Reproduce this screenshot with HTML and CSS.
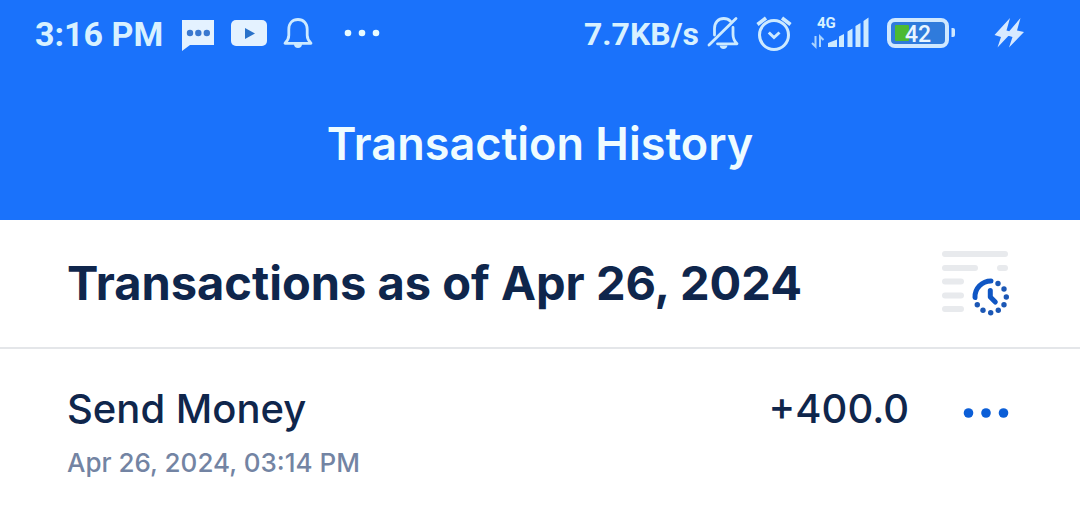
FILE: index.html
```html
<!DOCTYPE html>
<html lang="en">
<head>
  <meta charset="UTF-8" />
  <meta name="viewport" content="width=device-width, initial-scale=1.0" />
  <title>Transaction History</title>
  <link rel="stylesheet" href="styles.css">
</head>
<body>
  <header class="header">
    <div class="status-bar">
      <div class="status-left">
        <span class="time">3:16 PM</span>
        <svg class="icon" width="34" height="36" viewBox="0 0 34 36">
          <path d="M1 4h32v25H9l-8 6z" fill="#e4f2ff" />
          <g fill="#3a78cf"><circle cx="9" cy="17" r="3.2" /><circle cx="17.3" cy="17" r="3.2" /><circle cx="25.8" cy="17" r="3.2" /></g>
        </svg>
        <svg class="icon" width="36" height="36" viewBox="0 0 36 36">
          <rect y="4" width="36" height="26" rx="5" fill="#e4f2ff" />
          <path d="M14 12v11l10-5.5z" fill="#2a72c9" />
        </svg>
        <svg class="icon" width="30" height="36" viewBox="0 0 30 36">
          <path d="M2 27.3h26c-2.5-2.5-3.8-4.5-3.8-8v-6c0-5.8-3.6-9.8-9.2-9.8s-9.2 4-9.2 9.8v6c0 3.5-1.3 5.5-3.8 8z" fill="none" stroke="#cdeaff" stroke-width="2.8" stroke-linejoin="round" />
          <path d="M11 28h8c0 2.5-1.5 4-4 4s-4-1.5-4-4z" fill="#cdeaff" />
        </svg>
        <svg class="icon more-icon" width="36" height="36" viewBox="0 0 36 36">
          <g fill="#e8fbff"><circle cx="4" cy="17" r="3.3" /><circle cx="18" cy="17" r="3.3" /><circle cx="32" cy="17" r="3.3" /></g>
        </svg>
      </div>
      <div class="status-right">
        <span class="speed">7.7KB/s</span>
        <svg class="icon" width="34" height="36" viewBox="0 0 34 36">
          <g fill="none" stroke="#cdeaff" stroke-width="2.8" stroke-linecap="round" stroke-linejoin="round">
            <path d="M7.5 19v-6.5c0-6 3.8-10 9.3-10 2.8 0 5 1 6.7 2.8" />
            <path d="M26 11.5v7c0 4 1.3 6.5 4 9.3H10.5" />
            <path d="M2 29 29 2.500" />
          </g>
          <path d="M12.5 29.5h8c-.5 2.3-1.8 3.5-4 3.5s-3.5-1.2-4-3.5z" fill="#cdeaff" />
        </svg>
        <svg class="icon alarm-icon" width="36" height="36" viewBox="0 0 36 36">
          <g fill="none" stroke="#cdeaff" stroke-width="3">
            <circle cx="18" cy="19" r="14.5" />
            <path d="M1.500 8.500 10 2M26 2l8.500 6.500" stroke-width="3.6" />
            <path d="m12.8 16.5 5.2 5 5.500-5" />
          </g>
        </svg>
        <svg class="icon signal-icon" width="60" height="48" viewBox="0 -6 60 48">
          <text class="network" x="6" y="12">4G</text>
          <path d="M17 31v-4l9-3.500V31zM28 31V20.500l5-2.500v13zM36.500 31V15.500l5-3V31zM44.500 31V10l5-3v24zM52.500 31V5l5-3.500V31z" fill="#cdeaff" />
          <path d="M4.500 20v10.500L1 27M9 31V20.500l3.500 3.500" fill="none" stroke="#a9d3ff" stroke-width="2" />
        </svg>
        <svg class="icon battery-icon" width="70" height="36" viewBox="0 0 70 36">
          <rect x="2" y="4" width="58" height="26" rx="6" fill="#2f7bdc" stroke="#cfe8ff" stroke-width="4" />
          <rect x="8" y="9" width="14" height="16" rx="1" fill="#4cba32" />
          <path d="M64.5 12h1.5q2 0 2 2v5q0 2-2 2h-1.5z" fill="#cfe8ff" />
          <text class="battery-level" x="18" y="26">42</text>
        </svg>
        <svg class="icon bolt-icon" width="30" height="36" viewBox="0 0 30 36">
          <path d="M16 2 .5 19l6.500 2-3.500 10.500L18 16l-5.500-1.500zM26.500 2 12 19l6.500 2L15 31.500 30 16l-7-1.500z" fill="#d7e9ff" />
        </svg>
      </div>
    </div>
    <h1>Transaction History</h1>
  </header>

  <main>
    <div class="summary">
      <h2>Transactions as of Apr 26, 2024</h2>
      <button class="icon-button" type="button" aria-label="Filter by date">
        <svg class="icon" width="70" height="70" viewBox="0 0 70 70">
          <path d="M5 6h60M5 20h30M60 20h5M5 33.500h16M5 47.500h16M5 61h16" fill="none" stroke="#e8eaed" stroke-width="6" stroke-linecap="round" />
          <g transform="translate(2 0)">
            <path d="M33 49.500a16 16 0 0 1 16-16.500M48.300 42.500v6.500l5 5" fill="none" stroke="#0f56c4" stroke-width="5" stroke-linecap="round" stroke-linejoin="round" />
            <g fill="#1b57b5">
              <circle cx="56" cy="35.5" r="2.7" /><circle cx="62" cy="41" r="2.7" /><circle cx="64.3" cy="49" r="2.7" /><circle cx="62" cy="56.7" r="2.7" />
              <circle cx="56.3" cy="62.3" r="2.7" /><circle cx="48.7" cy="64.7" r="2.7" /><circle cx="41" cy="62.3" r="2.7" /><circle cx="35.3" cy="56.7" r="2.7" />
            </g>
          </g>
        </svg>
      </button>
    </div>

    <div class="transaction">
      <div class="details">
        <h3>Send Money</h3>
        <p class="date">Apr 26, 2024, 03:14 PM</p>
      </div>
      <span class="amount">+400.0</span>
      <button class="icon-button" type="button" aria-label="More options">
        <svg class="icon" width="46" height="44" viewBox="0 0 46 44">
          <g fill="#0b5ed7"><circle cx="5.5" cy="26" r="4.8" /><circle cx="23" cy="26" r="4.8" /><circle cx="40.5" cy="26" r="4.8" /></g>
        </svg>
      </button>
    </div>
  </main>
</body>
</html>
```

FILE: styles.css
```css
body {
  margin: 0;
  background: #fff;
  color: #0f264c;
  font-family: Inter, 'Open Sans', sans-serif;
}

h1, h2, h3, p {
  margin: 0;
}

.header {
  background: #1a72fb;
  color: #effcff;
  padding-bottom: 46px;
}

.status-bar {
  display: flex;
  justify-content: space-between;
  align-items: center;
  height: 68px;
  padding: 0 56px 0 35px;
  font-family: Roboto, sans-serif;
  font-size: 34px;
  font-weight: 700;
  color: #d8f1ff;
}

.status-left,
.status-right {
  display: flex;
  align-items: center;
}

.status-left {
  gap: 16px;
}

.status-right {
  gap: 8px;
}

.time {
  margin-right: 2px;
}

.speed {
  font-size: 32px;
}

.icon {
  display: block;
  flex: none;
}

.more-icon {
  margin-left: 15px;
}

.alarm-icon {
  margin-left: 7px;
}

.signal-icon {
  margin-left: 11px;
}

.battery-icon {
  margin-left: 8px;
}

.bolt-icon {
  margin-left: 29px;
}

.network {
  font-size: 15px;
  fill: #d8f1ff;
}

.battery-level {
  font-size: 23px;
  font-weight: 500;
  fill: #e9f6ff;
}

h1 {
  padding-top: 46px;
  font-size: 45px;
  line-height: 60px;
  font-weight: 600;
  text-align: center;
}

.summary {
  display: flex;
  justify-content: space-between;
  align-items: center;
  padding: 28px 70px 29px 67px;
  border-bottom: 2px solid #e4e6e9;
}

h2 {
  font-size: 47px;
  line-height: 70px;
  font-weight: 700;
}

.icon-button {
  padding: 0;
  border: 0;
  background: none;
  cursor: pointer;
}

.transaction {
  display: flex;
  align-items: flex-start;
  padding: 38px 71px 30px 67px;
}

.details {
  flex: 1;
}

h3,
.amount {
  font-size: 40px;
  line-height: 44px;
  font-weight: 500;
}

.amount {
  margin-right: 54px;
}

.date {
  margin-top: 14px;
  color: #7384a3;
  font-size: 26px;
  line-height: 36px;
  font-weight: 500;
}
```
